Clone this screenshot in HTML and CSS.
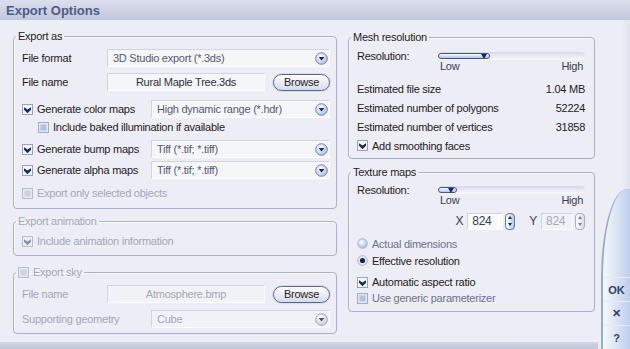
FILE: index.html
```html
<!DOCTYPE html>
<html>
<head>
  <title>Export Options</title>
  <link rel="stylesheet" href="styles.css">
</head>
<body>
<svg class="defs" width="0" height="0">
  <defs>
    <radialGradient id="arrowFill" cx="0.4" cy="0.35" r="0.7">
      <stop offset="0" stop-color="#ffffff"/>
      <stop offset="1" stop-color="#a9bbe2"/>
    </radialGradient>
    <radialGradient id="arrowFillOff" cx="0.4" cy="0.35" r="0.7">
      <stop offset="0" stop-color="#ffffff"/>
      <stop offset="1" stop-color="#c9cedd"/>
    </radialGradient>
    <radialGradient id="radioFill" cx="0.4" cy="0.35" r="0.7">
      <stop offset="0" stop-color="#ffffff"/>
      <stop offset="1" stop-color="#9fb3de"/>
    </radialGradient>
  </defs>
</svg>

<div class="window">
  <div class="titlebar">Export Options</div>
  <div class="main">
    <div class="content">
      <div class="columns">

        <div class="col col-left">
          <fieldset class="group group-export">
            <legend>Export as</legend>
            <div class="row">
              <span class="label">File format</span>
              <div class="field select">
                <span>3D Studio export (*.3ds)</span>
                <svg class="arrow" viewBox="0 0 13 13"><circle cx="6.5" cy="6.5" r="5.8" fill="url(#arrowFill)" stroke="#7083b6"/><path d="M3.6 5 H9.4 L6.5 8.6Z" fill="#1b2866"/></svg>
              </div>
            </div>
            <div class="row mt-4">
              <span class="label">File name</span>
              <div class="field file">Rural Maple Tree.3ds</div>
              <button class="browse">Browse</button>
            </div>
            <div class="row mt-7">
              <span class="check wide">
                <svg class="cb" viewBox="0 0 11 11"><rect x="0.5" y="0.5" width="10" height="10" fill="#f4f6fb" stroke="#97a2c3"/><path d="M2 3.2 L5.5 5.6 L9 3.2 V5.8 L5.5 9.2 L2 5.8Z" fill="#1b2866"/></svg>
                Generate color maps
              </span>
              <div class="field select">
                <span>High dynamic range (*.hdr)</span>
                <svg class="arrow" viewBox="0 0 13 13"><circle cx="6.5" cy="6.5" r="5.8" fill="url(#arrowFill)" stroke="#7083b6"/><path d="M3.6 5 H9.4 L6.5 8.6Z" fill="#1b2866"/></svg>
              </div>
            </div>
            <div class="row row-small">
              <span class="check indent">
                <svg class="cb" viewBox="0 0 11 11"><rect x="0.5" y="0.5" width="10" height="10" fill="#e4e7f1" stroke="#a4adc8"/><rect x="2.5" y="2.5" width="6" height="6" fill="#b4c0de"/></svg>
                Include baked illumination if available
              </span>
            </div>
            <div class="row mt-4">
              <span class="check wide">
                <svg class="cb" viewBox="0 0 11 11"><rect x="0.5" y="0.5" width="10" height="10" fill="#f4f6fb" stroke="#97a2c3"/><path d="M2 3.2 L5.5 5.6 L9 3.2 V5.8 L5.5 9.2 L2 5.8Z" fill="#1b2866"/></svg>
                Generate bump maps
              </span>
              <div class="field select">
                <span>Tiff (*.tif; *.tiff)</span>
                <svg class="arrow" viewBox="0 0 13 13"><circle cx="6.5" cy="6.5" r="5.8" fill="url(#arrowFill)" stroke="#7083b6"/><path d="M3.6 5 H9.4 L6.5 8.6Z" fill="#1b2866"/></svg>
              </div>
            </div>
            <div class="row mt-1">
              <span class="check wide">
                <svg class="cb" viewBox="0 0 11 11"><rect x="0.5" y="0.5" width="10" height="10" fill="#f4f6fb" stroke="#97a2c3"/><path d="M2 3.2 L5.5 5.6 L9 3.2 V5.8 L5.5 9.2 L2 5.8Z" fill="#1b2866"/></svg>
                Generate alpha maps
              </span>
              <div class="field select">
                <span>Tiff (*.tif; *.tiff)</span>
                <svg class="arrow" viewBox="0 0 13 13"><circle cx="6.5" cy="6.5" r="5.8" fill="url(#arrowFill)" stroke="#7083b6"/><path d="M3.6 5 H9.4 L6.5 8.6Z" fill="#1b2866"/></svg>
              </div>
            </div>
            <div class="row mt-3 off">
              <span class="check">
                <svg class="cb" viewBox="0 0 11 11"><rect x="0.5" y="0.5" width="10" height="10" fill="#e6e8f0" stroke="#b8bed2"/><rect x="2.5" y="2.5" width="6" height="6" fill="#ccd1e0"/></svg>
                Export only selected objects
              </span>
            </div>
          </fieldset>

          <fieldset class="group group-anim off">
            <legend>Export animation</legend>
            <div class="row">
              <span class="check">
                <svg class="cb" viewBox="0 0 11 11"><rect x="0.5" y="0.5" width="10" height="10" fill="#eceef4" stroke="#b8bed2"/><path d="M2 3.2 L5.5 5.6 L9 3.2 V5.8 L5.5 9.2 L2 5.8Z" fill="#8990a8"/></svg>
                Include animation information
              </span>
            </div>
          </fieldset>

          <fieldset class="group group-sky off">
            <legend>
              <span class="check">
                <svg class="cb" viewBox="0 0 11 11"><rect x="0.5" y="0.5" width="10" height="10" fill="#e6e8f0" stroke="#b8bed2"/><rect x="2.5" y="2.5" width="6" height="6" fill="#ccd1e0"/></svg>
                Export sky
              </span>
            </legend>
            <div class="row">
              <span class="label">File name</span>
              <div class="field file">Atmosphere.bmp</div>
              <button class="browse">Browse</button>
            </div>
            <div class="row mt-5">
              <span class="label wide">Supporting geometry</span>
              <div class="field select">
                <span>Cube</span>
                <svg class="arrow" viewBox="0 0 13 13"><circle cx="6.5" cy="6.5" r="5.8" fill="url(#arrowFillOff)" stroke="#9aa2bc"/><path d="M3.6 5 H9.4 L6.5 8.6Z" fill="#4a5170"/></svg>
              </div>
            </div>
          </fieldset>
        </div>

        <div class="col col-right">
          <fieldset class="group group-mesh">
            <legend>Mesh resolution</legend>
            <div class="slider-row">
              <span class="slider-label">Resolution:</span>
              <div class="track"><div class="thumb" style="width: 52px;"><i></i></div></div>
            </div>
            <div class="scale"><span>Low</span><span>High</span></div>
            <div class="stat mt-8"><span>Estimated file size</span><span>1.04 MB</span></div>
            <div class="stat"><span>Estimated number of polygons</span><span>52224</span></div>
            <div class="stat"><span>Estimated number of vertices</span><span>31858</span></div>
            <div class="stat">
              <span class="check">
                <svg class="cb" viewBox="0 0 11 11"><rect x="0.5" y="0.5" width="10" height="10" fill="#f4f6fb" stroke="#97a2c3"/><path d="M2 3.2 L5.5 5.6 L9 3.2 V5.8 L5.5 9.2 L2 5.8Z" fill="#1b2866"/></svg>
                Add smoothing faces
              </span>
            </div>
          </fieldset>

          <fieldset class="group group-texture">
            <legend>Texture maps</legend>
            <div class="slider-row">
              <span class="slider-label">Resolution:</span>
              <div class="track"><div class="thumb" style="width: 19px;"><i></i></div></div>
            </div>
            <div class="scale"><span>Low</span><span>High</span></div>
            <div class="spin-row mt-7">
              <span class="axis">X</span>
              <div class="field spin-field">824</div>
              <span class="spinner"><i class="up"></i><i class="down"></i></span>
              <span class="axis axis-y">Y</span>
              <div class="field spin-field off">824</div>
              <span class="spinner off"><i class="up"></i><i class="down"></i></span>
            </div>
            <div class="opt mt-5 dim">
              <svg class="radio" viewBox="0 0 11 11"><circle cx="5.5" cy="5.5" r="4.8" fill="url(#radioFill)" stroke="#a8b6d8"/></svg>
              Actual dimensions
            </div>
            <div class="opt">
              <svg class="radio" viewBox="0 0 11 11"><circle cx="5.5" cy="5.5" r="4.8" fill="#e6eaf4" stroke="#a8b2cc"/><circle cx="5.5" cy="5.5" r="2.6" fill="#1b2150"/></svg>
              Effective resolution
            </div>
            <div class="opt opt-small mt-5">
              <svg class="cb" viewBox="0 0 11 11"><rect x="0.5" y="0.5" width="10" height="10" fill="#f4f6fb" stroke="#97a2c3"/><path d="M2 3.2 L5.5 5.6 L9 3.2 V5.8 L5.5 9.2 L2 5.8Z" fill="#1b2866"/></svg>
              Automatic aspect ratio
            </div>
            <div class="opt opt-small dim">
              <svg class="cb" viewBox="0 0 11 11"><rect x="0.5" y="0.5" width="10" height="10" fill="#e4e7f1" stroke="#a4adc8"/><rect x="2.5" y="2.5" width="6" height="6" fill="#b4c0de"/></svg>
              Use generic parameterizer
            </div>
          </fieldset>
        </div>

      </div>
      <div class="bottombar"></div>
    </div>

    <div class="side">
      <div class="wing">
        <div class="side-btn">OK</div>
        <div class="side-btn">&#x2715;</div>
        <div class="side-btn">?</div>
      </div>
    </div>
  </div>
</div>
</body>
</html>
```

FILE: styles.css
```css
body {
  margin: 0;
  font-family: "Liberation Sans", Arial, sans-serif;
  font-size: 11px;
  letter-spacing: -0.25px;
  color: #1f2026;
  background: #ededf5;
}

.defs {
  position: absolute;
}

.window {
  width: 630px;
  height: 349px;
  display: flex;
  flex-direction: column;
  overflow: hidden;
  background: #ededf5;
}

.titlebar {
  height: 20px;
  flex: none;
  padding: 1px 0 0 6px;
  box-sizing: border-box;
  font-size: 13px;
  font-weight: bold;
  letter-spacing: 0;
  line-height: 20px;
  color: #4f5a89;
  background: linear-gradient(#dcdfed, #c3c7dc);
}

.main {
  flex: 1;
  display: flex;
}

.content {
  flex: 1;
  display: flex;
  flex-direction: column;
}

.columns {
  flex: 1;
  display: flex;
  gap: 11px;
  padding: 10px 0 0 13px;
}

.col-left {
  width: 324px;
}

.col-right {
  width: 247px;
}

.bottombar {
  height: 7px;
  background: linear-gradient(#d4d8e8, #bfc4da);
}

/* group boxes */

.group {
  margin: 0;
  padding: 5px 6px 5px 8px;
  border: 1px solid #a9b0ca;
  border-radius: 4px;
  min-width: 0;
  box-shadow: inset 1px 1px 0 #fafbfe;
}

.group legend {
  padding: 0 2px;
  margin-left: -6px;
  line-height: 13px;
}

.group-anim {
  margin-top: 6px;
  padding-top: 3px;
  padding-bottom: 4px;
}

.group-sky {
  margin-top: 10px;
  padding-top: 5px;
  padding-bottom: 4px;
}

.group-mesh {
  margin-top: 1px;
  padding: 5px 9px 3px 8px;
}

.group-texture {
  margin-top: 7px;
  padding: 4px 9px 5px 8px;
}

.off {
  color: #a3a7ba;
}

.dim {
  color: #6c7290;
}

/* rows */

.row {
  display: flex;
  align-items: center;
  height: 20px;
}

.row-small {
  height: 16px;
}

.mt-1 { margin-top: 1px; }
.mt-3 { margin-top: 3px; }
.mt-4 { margin-top: 4px; }
.mt-5 { margin-top: 5px; }
.mt-7 { margin-top: 7px; }
.mt-8 { margin-top: 8px; }

.label {
  width: 85px;
  flex: none;
}

.label.wide,
.check.wide {
  width: 129px;
  flex: none;
}

.check {
  display: flex;
  align-items: center;
  gap: 4px;
}

.check.indent {
  padding-left: 16px;
}

.cb,
.radio {
  width: 11px;
  height: 11px;
  flex: none;
}

/* inputs */

.field {
  height: 18px;
  box-sizing: border-box;
  background: #f5f6fa;
  border-top: 1px solid #d0d3e0;
  border-left: 1px solid #d0d3e0;
  border-bottom: 1px solid #fbfcff;
  border-right: 1px solid #fbfcff;
  display: flex;
  align-items: center;
}

.off .field,
.field.off {
  color: #a3a7ba;
  background: #f1f2f7;
}

.select {
  flex: 1;
  padding: 0 1px 0 5px;
  color: #555a70;
}

.select .arrow {
  width: 13px;
  height: 13px;
  margin-left: auto;
}

.off .select {
  color: #a3a7ba;
}

.file {
  width: 158px;
  justify-content: center;
  color: #2d3040;
}

.browse {
  margin-left: 8px;
  width: 57px;
  height: 17px;
  padding: 0;
  font-family: inherit;
  font-size: 11px;
  letter-spacing: -0.25px;
  color: #1f2026;
  border: 1px solid #5a6590;
  border-radius: 9px;
  background: linear-gradient(#ffffff, #d6dbea);
  box-shadow: 0 0 0 1px #d9ddea;
}

/* sliders */

.slider-row {
  display: flex;
  align-items: center;
  height: 14px;
}

.slider-label {
  width: 81px;
  flex: none;
}

.track {
  flex: 1;
  height: 8px;
  border-radius: 4px;
  background: linear-gradient(#d5d9e7, #f9fafd);
  display: flex;
  align-items: center;
}

.thumb {
  position: relative;
  height: 6px;
  box-sizing: border-box;
  border: 1px solid #43559a;
  border-radius: 4px;
  background: linear-gradient(#ffffff, #b5c3e6);
}

.thumb i {
  position: absolute;
  right: 2px;
  top: 0;
  border-left: 3px solid transparent;
  border-right: 3px solid transparent;
  border-top: 5px solid #1b2866;
}

.scale {
  display: flex;
  justify-content: space-between;
  height: 10px;
  margin-top: -2px;
  line-height: 10px;
  padding: 0 2px 0 83px;
  color: #3a3d4c;
}

.stat {
  display: flex;
  justify-content: space-between;
  align-items: center;
  height: 19px;
}

/* spin boxes */

.spin-row {
  display: flex;
  align-items: center;
  justify-content: flex-end;
  height: 18px;
  font-size: 12px;
}

.axis {
  margin-right: 4px;
  color: #3a3d4c;
}

.axis-y {
  margin-left: 14px;
}

.spin-field {
  width: 36px;
  height: 17px;
  padding-left: 4px;
  background: #fafbfe;
  color: #3a3d4c;
}

.spin-field.off {
  width: 32px;
  color: #a3a7ba;
}

.spinner {
  width: 8px;
  height: 15px;
  margin-left: 2px;
  border: 1px solid #6677aa;
  border-radius: 4px;
  background: linear-gradient(to right, #ffffff, #b9c6e6);
  display: flex;
  flex-direction: column;
  align-items: center;
  justify-content: space-around;
}

.spinner.off {
  border-color: #a6adc6;
  background: linear-gradient(to right, #ffffff, #d8dce8);
}

.spinner .up {
  border-left: 2px solid transparent;
  border-right: 2px solid transparent;
  border-bottom: 3px solid #1b2866;
}

.spinner .down {
  border-left: 2px solid transparent;
  border-right: 2px solid transparent;
  border-top: 3px solid #1b2866;
}

.spinner.off i {
  border-top-color: #7a8098;
  border-bottom-color: #7a8098;
}

.opt {
  display: flex;
  align-items: center;
  gap: 4px;
  height: 17px;
}

.opt-small {
  height: 16px;
}

/* side wing */

.side {
  width: 32px;
  display: flex;
  flex-direction: column;
  background: linear-gradient(to right, #ededf5 75%, #dfe2ee);
}

.wing {
  margin-top: auto;
  height: 160px;
  margin-left: 3px;
  border-left: 2px solid #97abd7;
  border-top-left-radius: 26px 90px;
  background: linear-gradient(to right, #f6f8fc, #c0ceeb);
  display: flex;
  flex-direction: column;
  justify-content: flex-end;
}

.side-btn {
  height: 24px;
  box-sizing: border-box;
  display: flex;
  align-items: center;
  justify-content: center;
  font-size: 11px;
  font-weight: bold;
  letter-spacing: 0;
  color: #34416f;
  border-top: 1px solid #e4eaf6;
}
```
